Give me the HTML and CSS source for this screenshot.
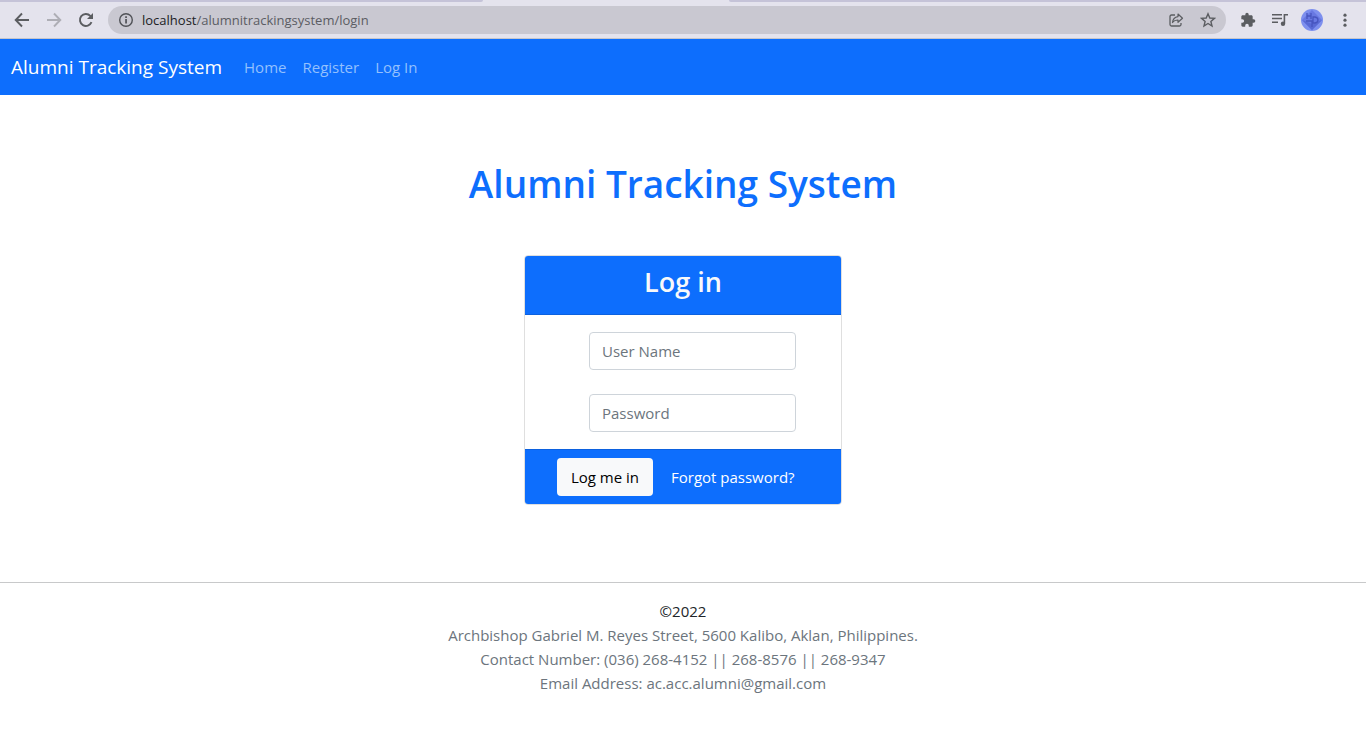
FILE: index.html
```html
<!DOCTYPE html>
<html lang="en">
<head>
<meta charset="utf-8">
<meta name="viewport" content="width=device-width, initial-scale=1">
<title>Alumni Tracking System</title>
<link rel="stylesheet" href="styles.css">
</head>
<body>
<div class="browser">
  <div class="tabs"><span class="tab-before"></span><span class="tab-active"></span><span class="tab-after"></span></div>
  <div class="toolbar">
    <div class="controls">
      <button class="tool" aria-label="Back"><svg viewBox="0 0 16 16"><path d="M15 8H2M8 1.500L1.700 8L8 14.500" fill="none" stroke="currentColor" stroke-width="1.900"/></svg></button>
      <button class="tool tool-off" aria-label="Forward"><svg viewBox="0 0 16 16"><path d="M1 8H14M8 1.500L14.300 8L8 14.500" fill="none" stroke="currentColor" stroke-width="1.900"/></svg></button>
      <button class="tool" aria-label="Reload"><svg viewBox="0 0 16 16"><path d="M13.500 10.200A6 6 0 1 1 12.300 3.800L13.500 5" fill="none" stroke="currentColor" stroke-width="1.900"/><path d="M15 1V7H9Z" fill="currentColor"/></svg></button>
    </div>
    <div class="address">
      <svg class="info" viewBox="0 0 16 16"><circle cx="8" cy="8" r="6.300" fill="none" stroke="currentColor" stroke-width="1.400"/><path d="M7.200 7h1.700v4.500H7.200zM7.200 4.300h1.700v1.600H7.200z" fill="currentColor"/></svg>
      <span class="url"><span class="host">localhost</span>/alumnitrackingsystem/login</span>
      <button class="tool" aria-label="Share"><svg viewBox="0 0 16 16"><path d="M7 3H3.500Q2 3 2 4.500V12.500Q2 14 3.500 14H11.500Q13 14 13 12.500V11" fill="none" stroke="currentColor" stroke-width="1.300"/><path d="M10 2L14.500 6.200L10 10.300V8Q6.500 7.800 4.500 10.500Q5 5.300 10 4.600Z" fill="none" stroke="currentColor" stroke-width="1.200" stroke-linejoin="round"/></svg></button>
      <button class="tool" aria-label="Bookmark"><svg viewBox="0 0 16 16"><path d="M8 1.800L9.800 6L14.400 6.400L10.900 9.400L12 14L8 11.500L4 14L5.100 9.400L1.600 6.400L6.200 6Z" fill="none" stroke="currentColor" stroke-width="1.400"/></svg></button>
    </div>
    <div class="extras">
      <button class="tool" aria-label="Extensions"><svg viewBox="0 0 24 24"><path fill="currentColor" d="M20.500 11H19V7c0-1.100-.9-2-2-2h-4V3.500a2.500 2.500 0 0 0-5 0V5H4c-1.100 0-2 .9-2 2v3.800h1.500a2.700 2.700 0 0 1 0 5.400H2V20c0 1.100.9 2 2 2h3.800v-1.500a2.700 2.700 0 0 1 5.400 0V22H17c1.100 0 2-.9 2-2v-4h1.500a2.500 2.500 0 0 0 0-5z"/></svg></button>
      <button class="tool" aria-label="Media"><svg viewBox="0 0 16 16"><path d="M0 2.800H10M0 6.500H10M0 10.200H6M12.400 11.500V2.800H16" fill="none" stroke="currentColor" stroke-width="1.600"/><circle cx="11" cy="11.700" r="2.200" fill="currentColor"/></svg></button>
      <button class="profile" aria-label="Profile"><svg viewBox="0 0 22 22"><circle cx="11" cy="11" r="11" fill="#7d8fee"/><path d="M11 1L21 11L11 21L1 11Z" fill="#6878e2"/><path d="M1 11L11 15L21 11L11 21Z" fill="#5869d4"/><path d="M6 4V10M10 4V10M6 7H10M12 8V14H14Q17 13.500 17 11Q17 8.500 14 8ZM5 12H11L11 18" fill="none" stroke="#4755bf" stroke-width="1.300"/></svg></button>
      <button class="tool" aria-label="Menu"><svg viewBox="0 0 16 16" fill="currentColor"><circle cx="8" cy="3.200" r="1.600"/><circle cx="8" cy="8.200" r="1.600"/><circle cx="8" cy="13.200" r="1.600"/></svg></button>
    </div>
  </div>
</div>
<nav class="navbar">
  <a class="brand" href="#">Alumni Tracking System</a>
  <a class="nav-link" href="#">Home</a>
  <a class="nav-link" href="#">Register</a>
  <a class="nav-link" href="#">Log In</a>
</nav>
<main class="main">
  <h1 class="title">Alumni Tracking System</h1>
  <form class="card">
    <h2 class="card-header">Log in</h2>
    <div class="card-body">
      <input class="field" type="text" placeholder="User Name" aria-label="User Name">
      <input class="field" type="password" placeholder="Password" aria-label="Password">
    </div>
    <div class="card-footer">
      <button class="submit" type="button">Log me in</button>
      <a class="forgot" href="#">Forgot password?</a>
    </div>
  </form>
</main>
<footer class="footer">
  <p class="copyright">©2022</p>
  <p>Archbishop Gabriel M. Reyes Street, 5600 Kalibo, Aklan, Philippines.</p>
  <p>Contact Number: (036) 268-4152 || 268-8576 || 268-9347</p>
  <p>Email Address: ac.acc.alumni@gmail.com</p>
</footer>
</body>
</html>
```
FILE: styles.css
```css
* { box-sizing: border-box; }
body {
  margin: 0;
  background: #fff;
  color: #212529;
  font: 15px/24px "Open Sans", "Noto Sans", sans-serif;
}
h1, h2, p { margin: 0; }
a { text-decoration: none; }
button { font: inherit; border: 0; padding: 0; }
svg { display: block; }

.browser { background: #e4e3ed; border-bottom: 1px solid #c4c5cb; }
.tabs { display: flex; height: 2px; }
.tab-before { flex: 483; background: #c5c3d8; border-bottom-right-radius: 2px; }
.tab-active { flex: 246; }
.tab-after { flex: 637; background: #c5c3d8; border-bottom-left-radius: 2px; }
.toolbar { display: flex; align-items: center; height: 36px; padding: 0 14px; }
.controls { display: flex; gap: 16px; padding-right: 14px; }
.tool { width: 16px; height: 16px; background: none; color: #5b5d61; flex: none; }
.tool-off { color: #aeaeb5; }
.address {
  display: flex;
  align-items: center;
  flex: 1;
  gap: 16px;
  height: 28px;
  padding: 0 10px;
  border-radius: 14px;
  background: #c9c8d1;
}
.info { width: 16px; height: 16px; color: #505257; }
.url { flex: 1; margin-left: -8px; font-size: 13px; line-height: 20px; color: #5b5c63; }
.host { color: #202124; }
.extras { display: flex; align-items: center; gap: 16px; padding-left: 14px; }
.profile { width: 22px; height: 22px; margin: 0 -3px; background: none; }
.profile + .tool { margin-left: 1px; margin-right: -1px; }

.navbar { display: flex; align-items: center; min-height: 56px; padding: 0 11px; background: #0d6efd; }
.brand { margin-right: 14px; color: #fff; font-size: 19px; line-height: 30px; }
.nav-link { padding: 0 8px; color: #93c0fe; }

.main { display: flex; flex-direction: column; align-items: center; padding: 65px 12px 77px; }
.title { margin-bottom: 47px; color: #0d6efd; font-size: 37px; line-height: 48px; font-weight: 600; text-align: center; }
.card { width: 318px; max-width: 100%; border: 1px solid #dfdfdf; border-radius: 4px; overflow: hidden; }
.card-header {
  padding: 9px 16px 15px;
  border-bottom: 1px solid #0c61df;
  background: #0d6efd;
  color: #f8f9fa;
  font-size: 27px;
  line-height: 34px;
  font-weight: 600;
  text-align: center;
}
.card-body { display: flex; flex-direction: column; gap: 24px; padding: 17px 45px 17px 64px; }
.field {
  width: 100%;
  height: 38px;
  padding: 6px 12px;
  border: 1px solid #ced4da;
  border-radius: 4px;
  background: #fff;
  color: #212529;
  font: inherit;
}
.field::placeholder { color: #6c757d; opacity: 1; }
.card-footer {
  display: flex;
  align-items: center;
  gap: 18px;
  padding: 8px 32px;
  border-top: 1px solid #0c61df;
  background: #0d6efd;
}
.submit { width: 96px; height: 38px; border-radius: 4px; background: #f8f9fa; color: #000; }
.forgot { color: #fff; white-space: nowrap; }

.footer { padding: 16px 12px 32px; border-top: 1px solid #c8c9ca; color: #6c757d; text-align: center; }
.copyright { color: #212529; }
```
